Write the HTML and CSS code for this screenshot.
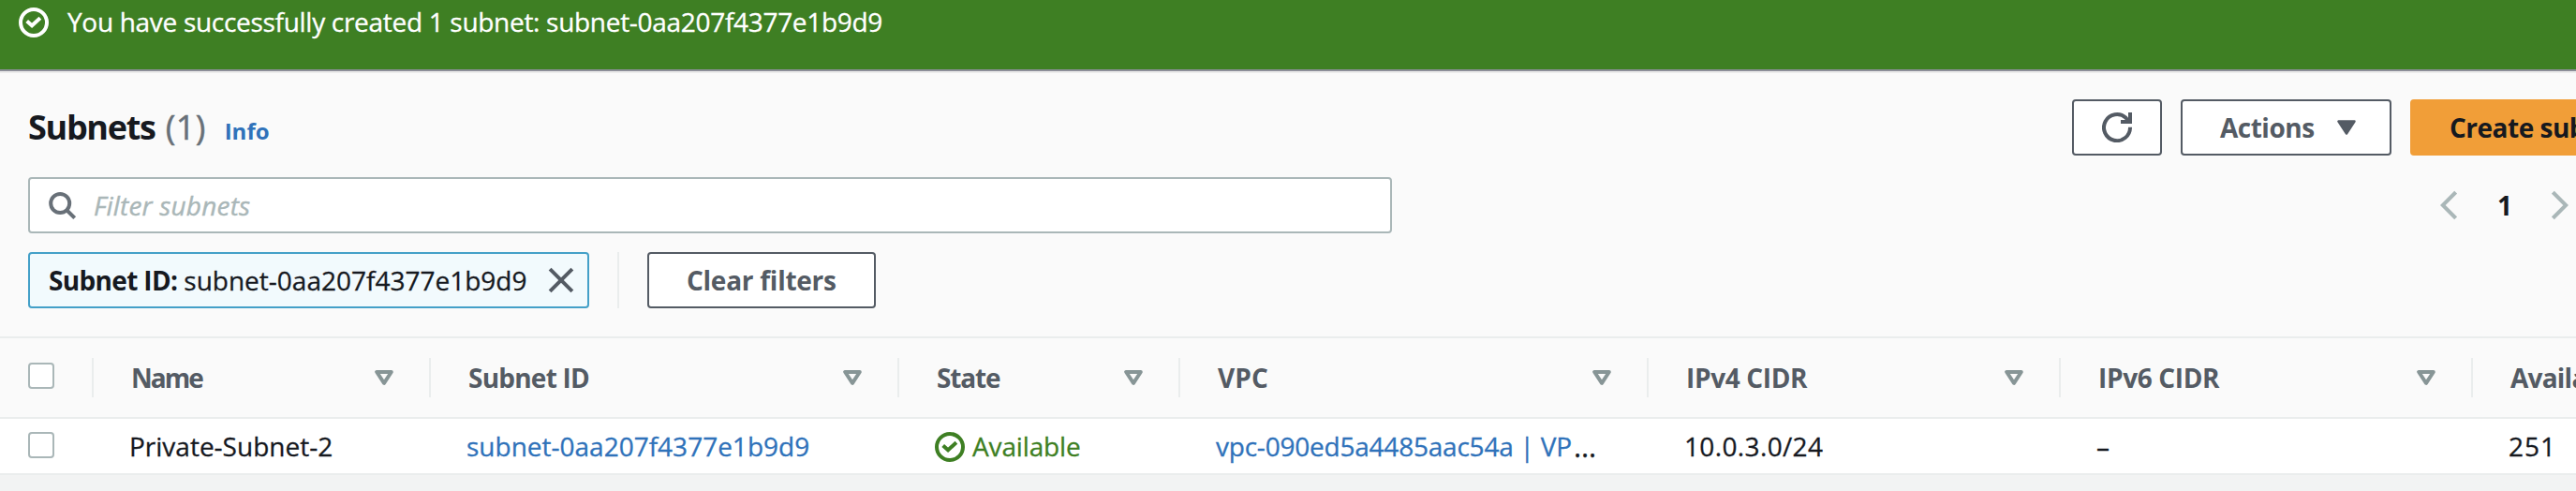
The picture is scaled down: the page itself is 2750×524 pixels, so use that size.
FILE: index.html
```
<!DOCTYPE html>
<html lang="en">
<head>
<meta charset="utf-8">
<title>Subnets</title>
<link rel="stylesheet" href="styles.css">
</head>
<body>
<svg class="defs" width="0" height="0">
  <symbol id="check" viewBox="0 0 32 32"><circle cx="16" cy="16" r="14"/><path d="M8.7 14.4 14.1 19.2 22.9 11.3"/></symbol>
  <symbol id="sort" viewBox="0 0 20 16"><path d="M2.2 2H17.8L10 13.8Z"/></symbol>
</svg>
<div class="page">
  <div class="flash">
    <svg class="icon32"><use href="#check"/></svg>
    <span>You have successfully created 1 subnet: subnet-0aa207f4377e1b9d9</span>
  </div>
  <header class="panel">
    <div class="title-row">
      <h1 class="title">Subnets</h1><span class="count">(1)</span><a class="info">Info</a>
      <div class="actions">
        <button class="btn refresh"><svg class="icon32" viewBox="0 0 32 32"><path d="M30 15.8A14 14 0 1 1 25.5 5.8L28 9M30 0V10H20"/></svg></button>
        <button class="btn menu"><span>Actions</span><svg class="caret" viewBox="0 0 20 16"><path d="M1.5 1.5H18.5L10 14.5Z"/></svg></button>
        <button class="btn primary">Create subnet</button>
      </div>
    </div>
    <div class="filter-row">
      <div class="search">
        <svg class="icon32" viewBox="0 0 32 32"><circle cx="14.2" cy="14" r="10"/><path d="M21 21 29.7 29.7"/></svg>
        <span>Filter subnets</span>
      </div>
      <div class="pager">
        <svg class="chevron" viewBox="0 0 18 32"><path d="M16.6 2.2 2.8 16 16.6 29.8"/></svg>
        <b>1</b>
        <svg class="chevron" viewBox="0 0 18 32"><path d="M1.4 2.2 15.2 16 1.4 29.8"/></svg>
      </div>
    </div>
    <div class="token-row">
      <div class="token"><b>Subnet ID:</b><span>subnet-0aa207f4377e1b9d9</span><svg class="close" viewBox="0 0 30 30"><path d="M3.1 3.1 26.9 26.9M26.9 3.1 3.1 26.9"/></svg></div>
      <div class="rule"></div>
      <button class="btn clear">Clear filters</button>
    </div>
  </header>
  <div class="grid head">
    <div class="cell pick"><i class="box"></i></div>
    <div class="cell"><span class="name">Name</span><svg class="sort"><use href="#sort"/></svg></div>
    <div class="cell"><span>Subnet ID</span><svg class="sort"><use href="#sort"/></svg></div>
    <div class="cell"><span class="state">State</span><svg class="sort"><use href="#sort"/></svg></div>
    <div class="cell"><span class="vpc">VPC</span><svg class="sort"><use href="#sort"/></svg></div>
    <div class="cell"><span class="cidr">IPv4 CIDR</span><svg class="sort"><use href="#sort"/></svg></div>
    <div class="cell"><span class="cidr">IPv6 CIDR</span><svg class="sort"><use href="#sort"/></svg></div>
    <div class="cell"><span>Available IPv4 addresses</span></div>
  </div>
  <div class="grid row">
    <div class="cell pick"><i class="box"></i></div>
    <div class="cell">Private-Subnet-2</div>
    <div class="cell"><a>subnet-0aa207f4377e1b9d9</a></div>
    <div class="cell ok"><svg class="icon32"><use href="#check"/></svg><span>Available</span></div>
    <div class="cell link"><a>vpc-090ed5a4485aac54a | VP</a><span class="more">…</span></div>
    <div class="cell ip">10.0.3.0/24</div>
    <div class="cell">–</div>
    <div class="cell free">251</div>
  </div>
</div>
</body>
</html>
```
FILE: styles.css
```
* { box-sizing: border-box; }
body {
  margin: 0;
  background: #f2f3f3;
  color: #16191f;
  font: 28px/40px "Open Sans", "Noto Sans", sans-serif;
}
svg { display: block; flex: none; fill: none; stroke: currentColor; stroke-width: 4; }
.defs { position: absolute; }
.page { width: 2750px; height: 524px; overflow: hidden; white-space: nowrap; }
.icon32 { width: 32px; height: 32px; }
a { color: #2f72ba; }

.flash {
  height: 78px;
  display: flex;
  align-items: flex-start;
  gap: 20px;
  padding: 8px 20px 0;
  background: #3e7f23;
  color: #fff;
  font-weight: 500;
  letter-spacing: -0.3px;
  -webkit-text-stroke: .3px;
  border-bottom: 2px solid #ececec;
  box-shadow: inset 0 -2px #8d8f99;
}
.flash span { line-height: 30px; }

.panel { background: #fafafa; height: 283px; padding: 28px 0 0 30px; border-bottom: 2px solid #eaeded; }
.title-row { display: flex; align-items: baseline; height: 60px; }
.title { margin: 0; font-size: 36px; line-height: 60px; letter-spacing: -1.3px; }
.count { margin-left: 11px; font-size: 36px; color: #687078; letter-spacing: .4px; -webkit-text-stroke: .5px; }
.info { margin-left: 20px; font-size: 24px; font-weight: 700; }
.actions { display: flex; gap: 20px; align-self: flex-start; width: 538px; margin-left: auto; }
.btn {
  flex: none;
  display: flex;
  align-items: center;
  height: 60px;
  padding: 0 40px;
  border: 2px solid #545b64;
  border-radius: 4px;
  background: #fff;
  color: #545b64;
  font: 700 28px/40px "Open Sans", "Noto Sans", sans-serif;
  letter-spacing: -.5px;
}
.refresh { width: 96px; padding: 0 30px; }
.menu { width: 225px; justify-content: space-between; padding-right: 36px; }
.caret { width: 20px; height: 16px; fill: currentColor; stroke-width: 2.5; stroke-linejoin: round; }
.primary { border-color: #f19e38; background: #f19e38; color: #16191f; }

.filter-row { display: flex; align-items: center; margin-top: 23px; height: 60px; }
.search {
  display: flex;
  align-items: center;
  width: 1456px;
  height: 60px;
  padding-left: 18px;
  border: 2px solid #aab7b8;
  border-radius: 4px;
  background: #fff;
  color: #687078;
}
.search span { margin-left: 18px; color: #aab7b8; font-style: italic; letter-spacing: .18px; -webkit-text-stroke: .4px; }
.pager { display: flex; align-items: center; width: 145px; margin-left: auto; color: #aab7b8; }
.pager b { width: 101px; padding-left: 43px; color: #16191f; }
.chevron { width: 18px; height: 32px; }

.token-row { display: flex; align-items: center; height: 60px; margin-top: 20px; }
.token {
  display: flex;
  align-items: center;
  width: 599px;
  height: 60px;
  padding: 0 13px 0 20px;
  border: 2px solid #44a0c8;
  border-radius: 4px;
  background: #f2fafd;
}
.token b { letter-spacing: -.66px; }
.token span { margin-left: 7px; -webkit-text-stroke: .3px; }
.close { width: 30px; height: 30px; margin-left: auto; color: #545b64; }
.rule { width: 2px; height: 60px; margin: 0 30px; background: #eaeded; }
.clear { width: 244px; letter-spacing: -.26px; }

.grid { display: grid; grid-template-columns: 100px 360px 500px 300px 500px 440px 440px 440px; }
.cell { display: flex; align-items: center; }
.box { width: 28px; height: 28px; border: 2px solid #aab7b8; border-radius: 4px; background: #fff; }

.head { height: 86px; padding: 21px 0; background: #fafafa; border-bottom: 2px solid #eaeded; color: #545b64; font-weight: 700; letter-spacing: -.77px; }
.head .cell { height: 42px; padding: 0 38px 0 40px; border-right: 2px solid #eaeded; justify-content: space-between; }
.head .pick { padding: 0 0 4px 30px; }
.head .name { letter-spacing: -2px; }
.head .state { letter-spacing: -1.16px; }
.head .vpc { letter-spacing: .1px; }
.head .cidr { letter-spacing: -.36px; }
.sort { width: 20px; height: 16px; color: #879596; stroke-linejoin: round; }

.row { height: 60px; background: #fff; border-bottom: 2px solid #eaeded; -webkit-text-stroke: .3px; }
.row .cell { padding-left: 38px; }
.row .pick { padding: 0 0 2px 30px; }
.ok { color: #3e7f23; gap: 8px; letter-spacing: -.14px; }
.ok .icon32 { margin-top: 2px; }
.link { letter-spacing: -.22px; }
.more { margin-left: 2px; font-size: 31px; }
.ip { letter-spacing: .36px; }
.free { letter-spacing: 1px; }
```
